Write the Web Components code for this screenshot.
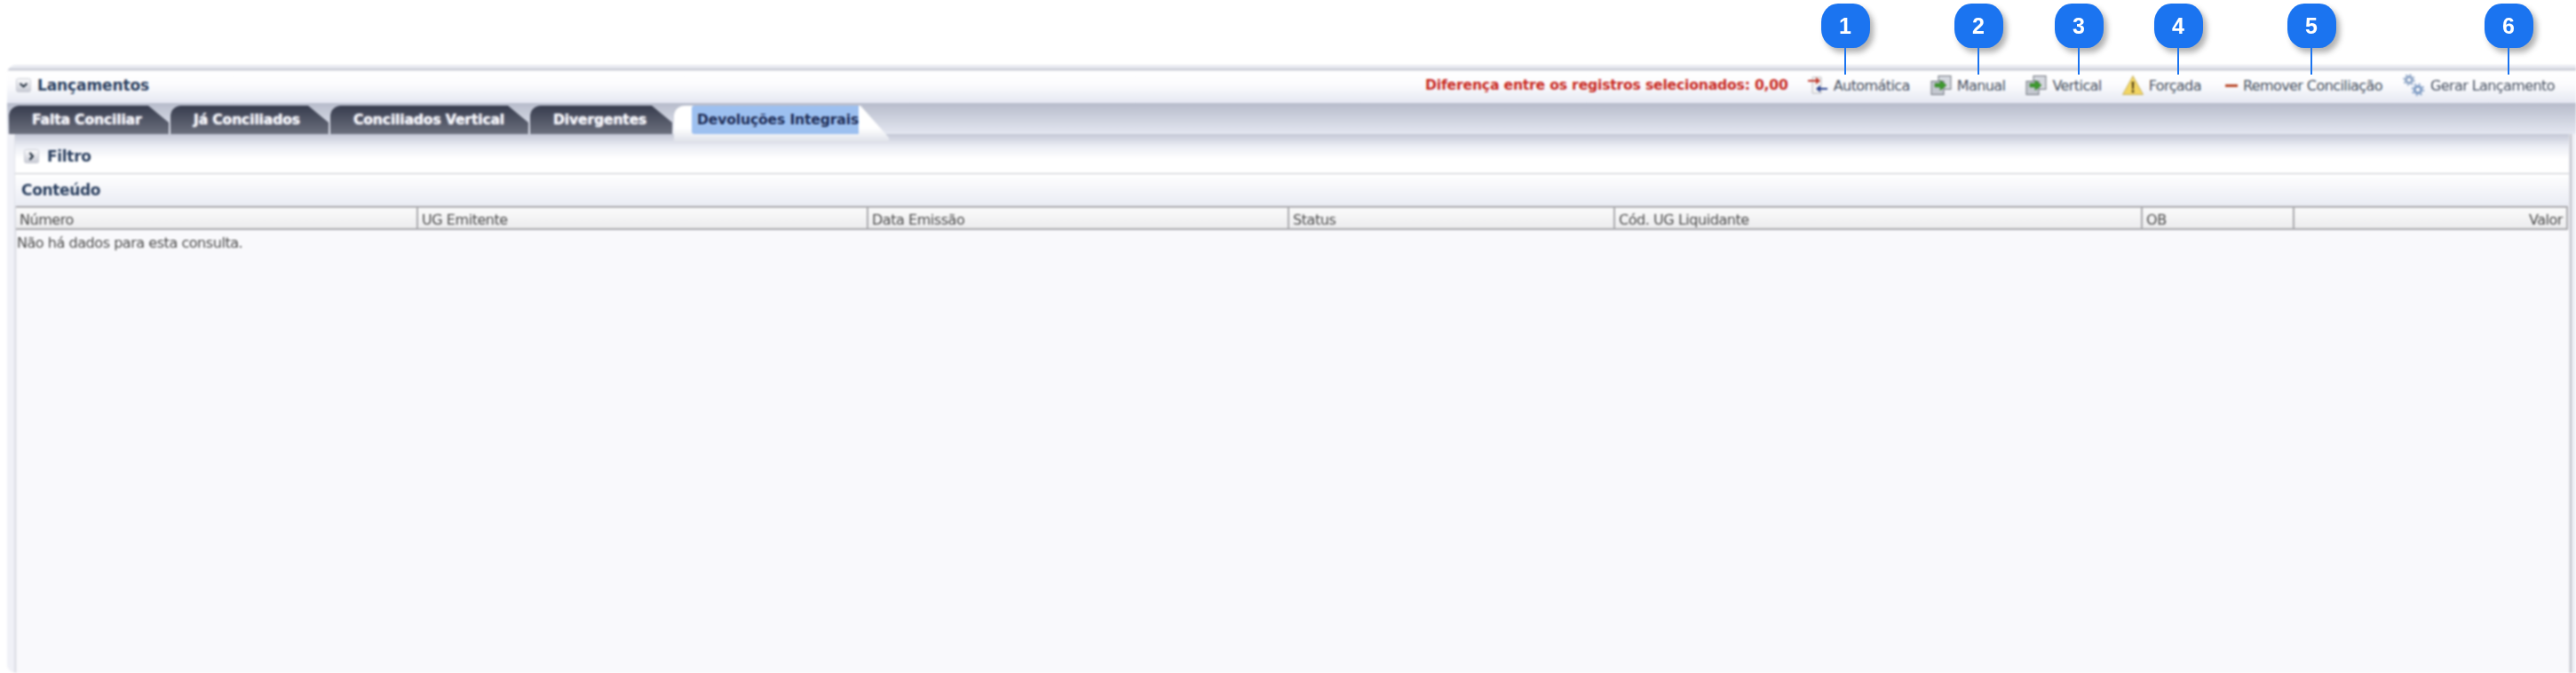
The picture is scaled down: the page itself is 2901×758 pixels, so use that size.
<!DOCTYPE html>
<html lang="pt"><head><meta charset="utf-8"><title>Lançamentos</title>
<style>html,body{margin:0;background:#fff}body{font-family:"DejaVu Sans",sans-serif}</style></head>
<body>
<x-app>
  <x-callouts slot="top"></x-callouts>
  <x-panel>
    <x-header>
      <x-tool slot="tools" icon="auto">Automática</x-tool>
      <x-tool slot="tools" icon="copy">Manual</x-tool>
      <x-tool slot="tools" icon="copy">Vertical</x-tool>
      <x-tool slot="tools" icon="warn">Forçada</x-tool>
      <x-tool slot="tools" icon="minus" style="margin-left:4px">Remover Conciliação</x-tool>
      <x-tool slot="tools" icon="gears">Gerar Lançamento</x-tool>
    </x-header>
    <x-tabs>
      <x-tab w="180">Falta Conciliar</x-tab>
      <x-tab w="178">Já Conciliados</x-tab>
      <x-tab w="223">Conciliados Vertical</x-tab>
      <x-tab w="160">Divergentes</x-tab>
      <x-tab w="242" active>Devoluções Integrais</x-tab>
    </x-tabs>
    <x-body>
      <x-filter>Filtro</x-filter>
      <x-section>Conteúdo</x-section>
      <x-table></x-table>
    </x-body>
  </x-panel>
</x-app>
<script>
const def=(n,html,init)=>customElements.define(n,class extends HTMLElement{
  constructor(){super();this.attachShadow({mode:'open'}).innerHTML=html}
  connectedCallback(){init&&init.call(this,this.shadowRoot)}
});
const chev=d=>`<svg width="17" height="16" viewBox="0 0 17 16"><defs><linearGradient id="b" x1="0" y1="0" x2="0" y2="1"><stop offset="0" stop-color="#fdfdfe"/><stop offset="1" stop-color="#c6c9d3"/></linearGradient></defs><rect x=".5" y=".5" width="16" height="15" rx="2" fill="url(#b)" stroke="#c9ccd5"/><path d="${d}" fill="none" stroke="#1f2c3b" stroke-width="2"/></svg>`;

def('x-app',`<style>:host{display:block;width:2901px;height:758px;overflow:hidden;position:relative;background:#fff}</style><slot name="top"></slot><slot></slot>`);

const spots=[[1,2078],[2,2228],[3,2341],[4,2453],[5,2603],[6,2825]];
def('x-callouts',`<style>
:host{display:block;height:73px;position:relative;z-index:5}
.c{position:absolute;top:4px;width:55px;height:50px;margin-left:-27.5px;background:#1b74f0;border-radius:19px/21px;color:#fff;font:700 25px/50px "Liberation Sans",sans-serif;text-align:center;box-shadow:4px 5px 6px rgba(60,60,60,.4)}
.c::after{content:"";position:absolute;left:26.5px;top:50px;width:2px;height:30px;background:#1b74f0}
</style>`+spots.map(([n,x])=>`<div class="c" style="left:${x}px">${n}</div>`).join(''));

def('x-panel',`<style>:host{display:block;margin-left:8px;height:685px;border-radius:10px 0 0 10px;overflow:hidden;filter:blur(.8px);background:#f1f2f8;display:flex;flex-direction:column}</style><slot></slot>`);

def('x-header',`<style>
:host{display:flex;align-items:center;box-sizing:border-box;height:43px;padding:3px 24px 0 10px;background:linear-gradient(#e9ebf1 0,#e9ebf1 4px,#c9ccd6 4px,#c9ccd6 6px,#fff 7px,#fcfcfe 22px,#e5e8f2 100%)}
.t{font:700 17px "DejaVu Sans",sans-serif;letter-spacing:-.1px;color:#2b4060;margin-left:7px}
.sp{flex:1}
.d{font:700 15.6px "DejaVu Sans",sans-serif;letter-spacing:-.18px;color:#c8281e;margin-right:21px}
.tools{display:flex;gap:23px;align-items:center}
svg{display:block}
</style>${chev('M4.5 6l4 3.5 4-3.5')}<span class="t">Lançamentos</span><span class="sp"></span><span class="d">Diferença entre os registros selecionados: 0,00</span><div class="tools"><slot name="tools"></slot></div>`);

const icons={
auto:`<svg width="24" height="24" viewBox="0 0 24 24"><path d="M6 3h10v18H6z" fill="#f4f4f4" stroke="#b9b9bd"/><path d="M1 6h9V3l5 4-5 4V8H1z" fill="#c0392b"/><path d="M23 15h-8v-3l-5 4 5 4v-3h8z" fill="#27408f"/></svg>`,
copy:`<svg width="24" height="24" viewBox="0 0 24 24"><rect x="9" y="1.5" width="14" height="15" fill="#d5d8df" stroke="#6f747d"/><rect x="1" y="7.5" width="14" height="15" fill="#c4c8d0" stroke="#6f747d"/><path d="M5 10h6V6.5l7 5.5-7 5.500V14H5z" fill="#3d9a2e" stroke="#2a6f20" stroke-width=".6"/></svg>`,
warn:`<svg width="24" height="24" viewBox="0 0 24 24"><path d="M12 1.500 23.500 22.500H.5z" fill="#f2d563" stroke="#c7b262"/><path d="M10.800 8h2.400l-.4 8.500h-1.600z" fill="#4a3a14"/><circle cx="12" cy="19" r="1.400" fill="#4a3a14"/></svg>`,
minus:`<svg width="14" height="24" viewBox="0 0 14 24"><rect x="0" y="11" width="14" height="3" fill="#b9492a"/></svg>`,
gears:`<svg width="25" height="26" viewBox="0 0 25 26"><g fill="none" stroke="#8ea5c6"><circle cx="7" cy="7" r="3.500" stroke-width="3"/><circle cx="7" cy="7" r="6" stroke-width="1.500" stroke-dasharray="2 2.700"/></g><g fill="none" stroke="#7f9cc4"><circle cx="17" cy="18" r="3.800" stroke-width="3"/><circle cx="17" cy="18" r="6.500" stroke-width="1.600" stroke-dasharray="2.200 2.900"/></g></svg>`
};
def('x-tool',`<style>
:host{display:flex;align-items:center;gap:6px;font:16px "DejaVu Sans",sans-serif;letter-spacing:-.58px;color:#465060}
svg{display:block}
</style><span id="i"></span><slot></slot>`,function(r){r.getElementById('i').innerHTML=icons[this.getAttribute('icon')];r.getElementById('i').style.display='block'});

def('x-tabs',`<style>:host{display:flex;box-sizing:border-box;height:35px;padding:3px 0 0 2px;gap:2px;background:linear-gradient(#b7bccb,#e4e7f1);position:relative;z-index:1}</style><slot></slot>`);
def('x-tab',`<style>
:host{display:block;box-sizing:border-box;height:32px;padding-left:26px;font:700 15.6px/32px "DejaVu Sans",sans-serif;letter-spacing:-.15px;color:#f4f5f8;text-shadow:0 0 2px #dde;white-space:nowrap;
 background:linear-gradient(#373c4e,#6c707e);border-radius:12px 0 0 0;clip-path:polygon(0 0,calc(100% - 23px) 0,100% 19px,100% 100%,0 100%)}
:host([active]){height:42px;margin-bottom:-10px;padding-left:26px;color:#1f2e58;text-shadow:none;background:linear-gradient(#fff 60%,#dcdfe8);clip-path:polygon(0 0,calc(100% - 32px) 0,100% 36px,100% 100%,0 100%)}
:host([active]) span{display:inline-block;background:#9dc0f0;height:32px;line-height:32px;margin-top:-2px;padding:0 0 0 6px;margin-left:-6px;border-radius:3px 0 0 3px}
</style><span><slot></slot></span>`,function(){this.style.width=this.getAttribute('w')+'px'});

def('x-body',`<style>:host{display:flex;flex-direction:column;flex:1;box-sizing:border-box;padding:0 8px 0 9px;min-height:0;background:linear-gradient(90deg,#f0f1f7 0,#f0f1f7 8px,#cfd2da 9px,#f9f9fc 11px,#f9f9fc calc(100% - 8px),#c8c9d1 calc(100% - 7px),#c8c9d1 calc(100% - 5px),#f0f1f7 calc(100% - 4px))}</style><slot></slot>`);
def('x-filter',`<style>:host{display:flex;align-items:center;box-sizing:border-box;height:45px;padding:6px 0 0 10px;gap:9px;font:700 17px "DejaVu Sans",sans-serif;letter-spacing:-.3px;color:#2b4060;background:linear-gradient(#c4c8d6 0,#eceef5 14px,#fff 28px,#fff 100%);border-bottom:1px solid #c4c6cc}
svg{display:block}</style>${chev('M6.500 4l3.500 4-3.500 4')}<slot></slot>`);
def('x-section',`<style>:host{display:flex;align-items:center;box-sizing:border-box;height:36px;padding:0 0 0 7px;font:700 17px "DejaVu Sans",sans-serif;letter-spacing:-.35px;color:#2b4060;background:linear-gradient(#fff,#eaecf4)}</style><slot></slot>`);

const cols=[['Número',453],['UG Emitente',507],['Data Emissão',474],['Status',367],['Cód. UG Liquidante',594],['OB',171],['Valor',308]];
def('x-table',`<style>
:host{display:block;flex:1;margin-left:1px;font:16px "DejaVu Sans",sans-serif;letter-spacing:-.45px;color:#4c4c4c}
.h{display:grid;grid-template-columns:${cols.map(c=>c[1]+'px').join(' ')};width:2874px;box-sizing:border-box;height:27px;border-top:2px solid #a9a9ad;border-bottom:2px solid #a9a9ad;background:linear-gradient(#fbfbfb,#ececee)}
.c{box-sizing:border-box;padding-left:4px;line-height:27px;border-right:2px solid #a9a9ad;overflow:hidden;white-space:nowrap}
.c:last-child{text-align:right;padding-right:4px}
.e{padding:5px 0 0 1px;line-height:20px}
</style><div class="h" role="row">${cols.map(c=>`<div class="c">${c[0]}</div>`).join('')}</div><div class="e">Não há dados para esta consulta.</div>`);
</script>
</body></html>
